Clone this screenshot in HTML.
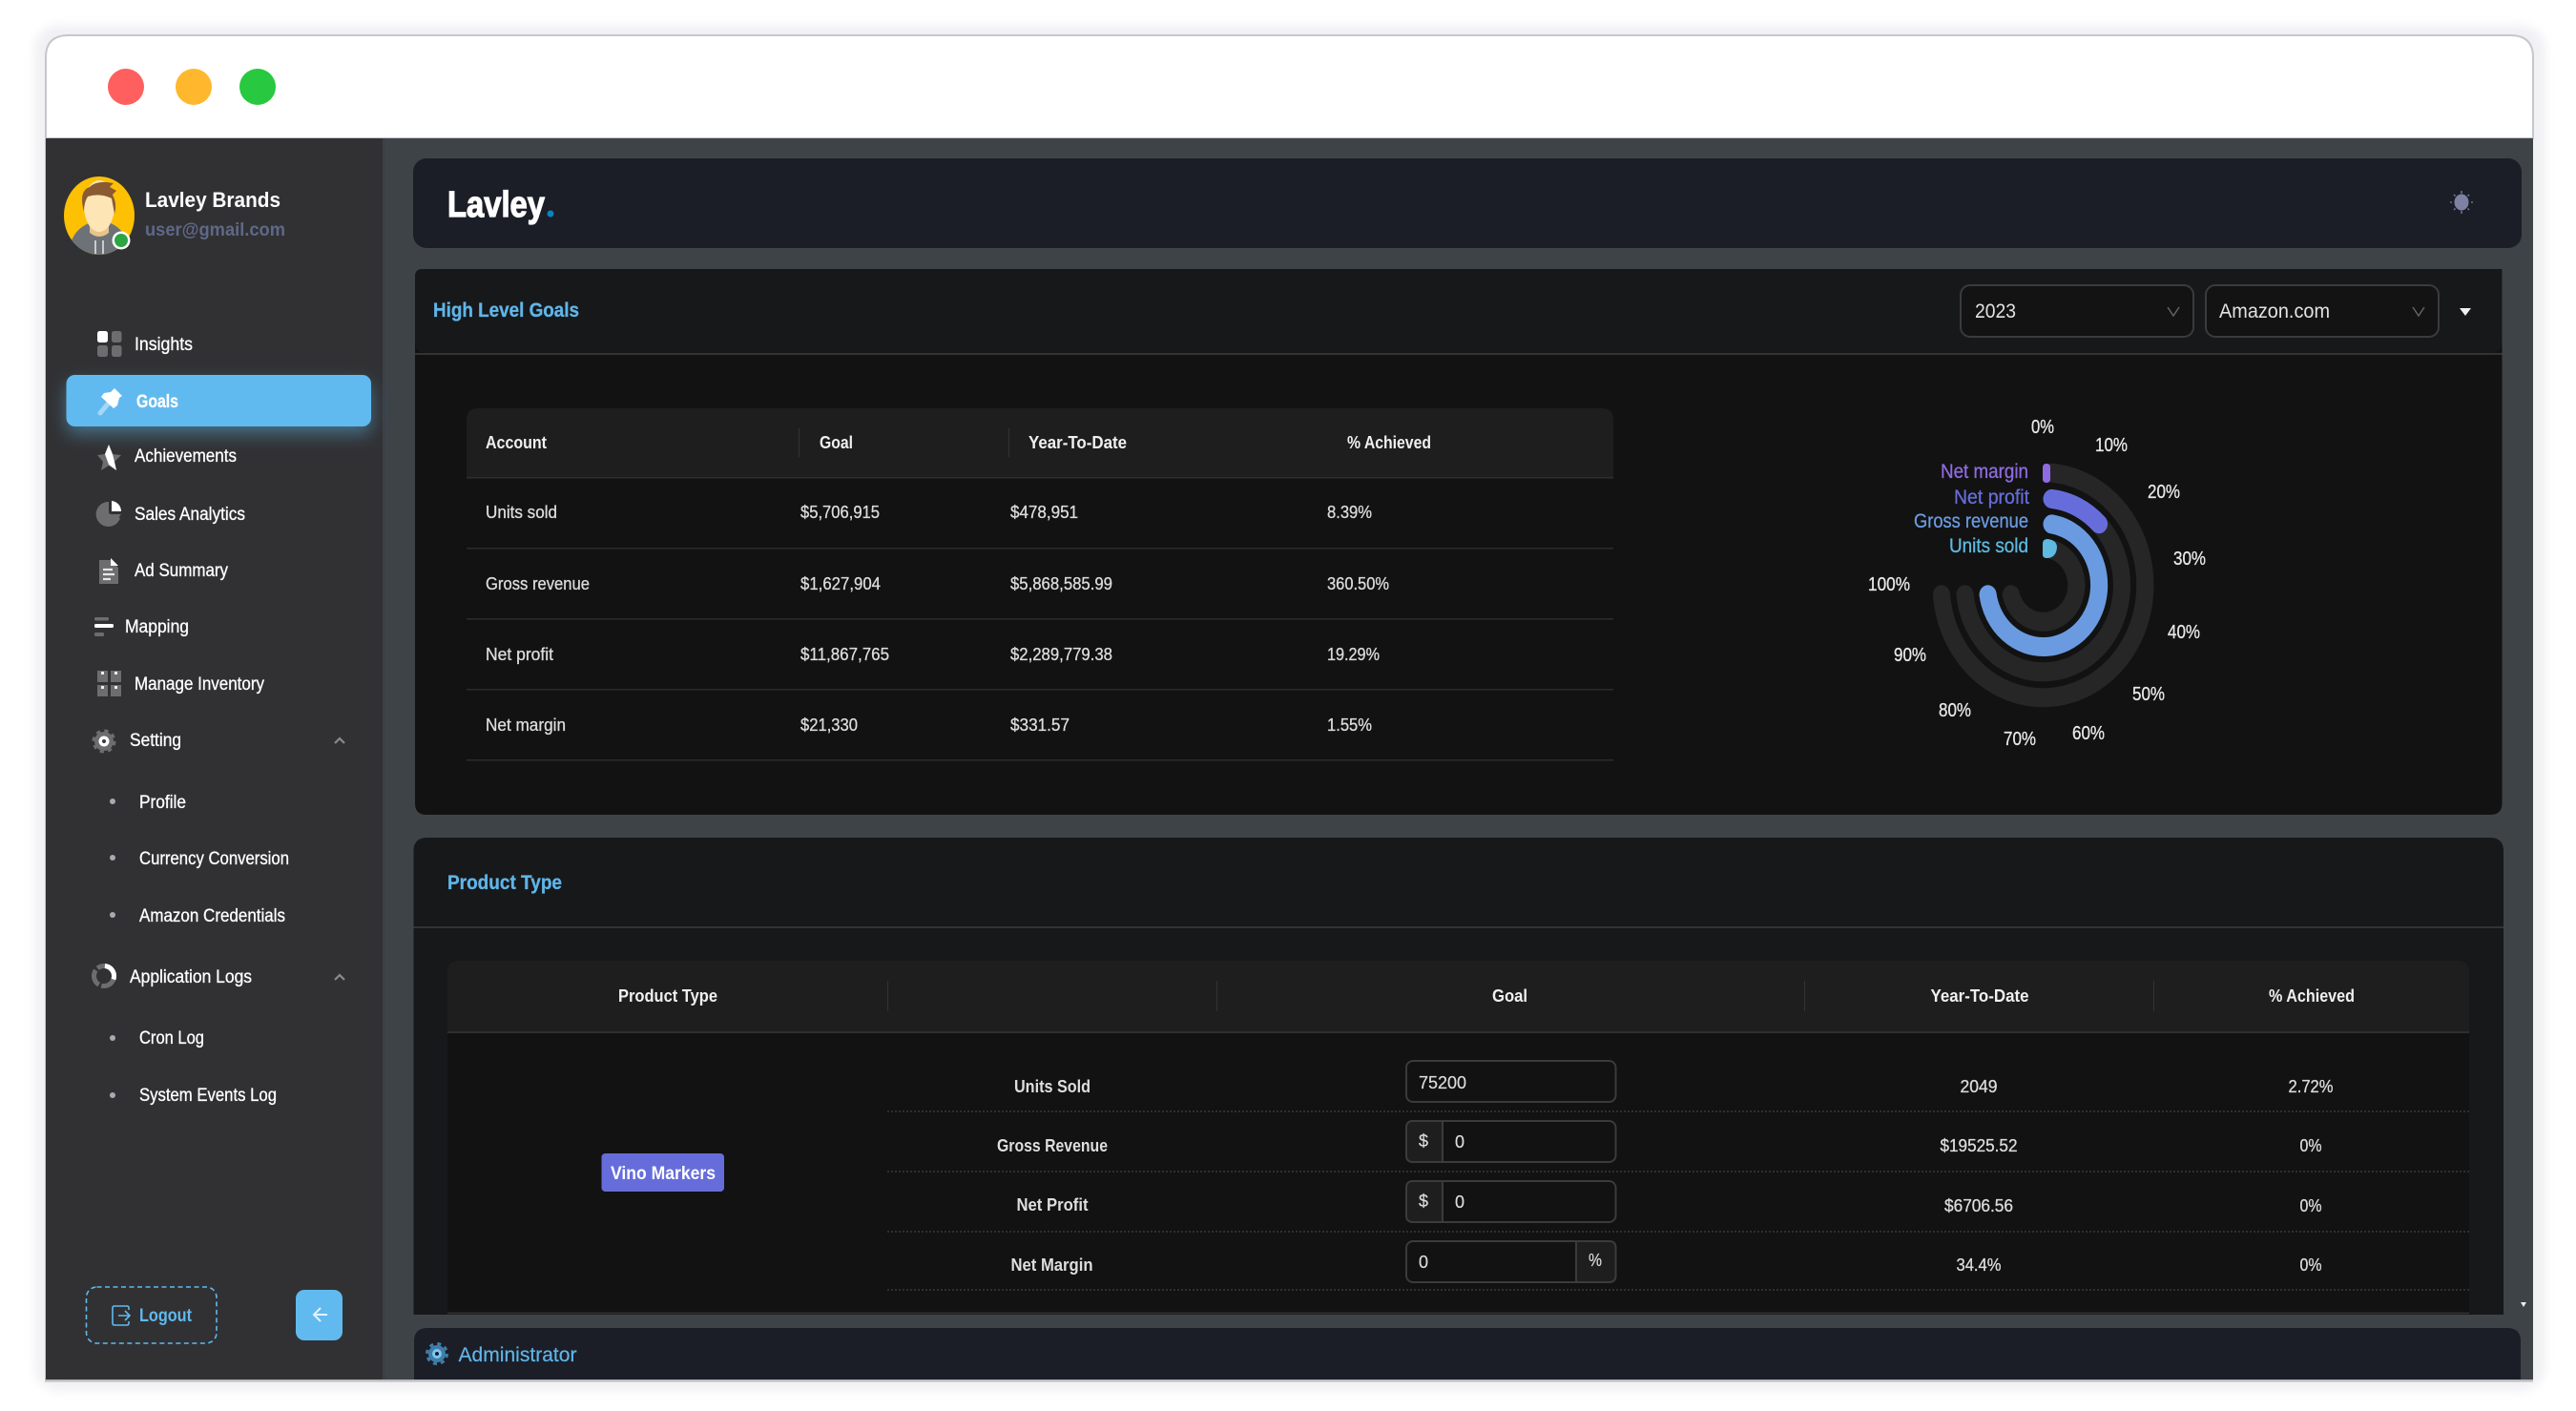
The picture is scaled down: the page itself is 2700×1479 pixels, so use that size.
<!DOCTYPE html>
<html><head><meta charset="utf-8"><title>Lavley</title>
<style>
html,body{margin:0;padding:0;background:#fff;width:2700px;height:1479px;overflow:hidden}
svg{display:block}
text{font-family:"Liberation Sans",sans-serif}
.n{font-size:19px;fill:#fff;stroke:#fff;stroke-width:.3}
.th{font-size:18px;font-weight:bold;fill:#f0f0f0}
.td{font-size:18px;fill:#dcdcdc;stroke:#dcdcdc;stroke-width:.3}
.tb{font-size:18px;font-weight:bold;fill:#dedede}
.c{font-size:20px;fill:#e8e8e8;stroke:#e8e8e8;stroke-width:.3}
.l{font-size:21px;stroke-width:.3}
.v{font-size:18px;fill:#dcdcdc;stroke:#dcdcdc;stroke-width:.2}
</style></head><body>
<svg xmlns="http://www.w3.org/2000/svg" width="2700" height="1479" viewBox="0 0 2700 1479">
<defs>
<filter id="b" x="-5%" y="-5%" width="110%" height="110%"><feGaussianBlur stdDeviation="5"/></filter>
<filter id="g" x="-30%" y="-60%" width="160%" height="240%"><feGaussianBlur stdDeviation="9"/></filter>
<clipPath id="av"><ellipse cx="104" cy="226" rx="37" ry="41"/></clipPath>
</defs>
<rect width="2700" height="1479" fill="#fff"/>
<rect x="36" y="26" width="2632" height="1432" rx="26" fill="#f1f1f4" filter="url(#b)"/>
<path d="M48 145V60Q48 37 72 37H2631Q2655 37 2655 60V145Z" fill="#fff" stroke="#c6c6ce" stroke-width="2"/>
<rect x="47" y="145" width="1" height="1302" fill="#c4c4c8"/>
<rect x="47" y="1446" width="2608" height="2.5" fill="#bdbdc0"/>
<circle cx="132" cy="91" r="19" fill="#ff5f5f"/>
<circle cx="203" cy="91" r="19" fill="#ffb72d"/>
<circle cx="270" cy="91" r="19" fill="#28c840"/>

<!-- main bg -->
<rect x="403" y="145" width="2252" height="1301" fill="#3e4347"/>
<!-- sidebar -->
<rect x="48" y="145" width="353" height="1301" fill="#313133"/>
<rect x="401" y="145" width="3" height="1301" fill="#394048"/>

<!-- avatar -->
<ellipse cx="104" cy="226" rx="37" ry="41" fill="#fdc003"/>
<g clip-path="url(#av)">
<path d="M72 270Q72 243 93 234H116Q136 243 136 270Z" fill="#6c7278"/>
<path d="M94 226H114V244Q104 252 94 244Z" fill="#e8c48c"/>
<ellipse cx="104" cy="216" rx="16" ry="27" fill="#fde5b6"/>
<path d="M88 222Q82 200 94 196Q100 190 112 191L119 192L115 196L122 200L118 204Q123 214 120 224L117 208Q105 202 92 206Q88 212 88 222Z" fill="#8a5a33"/>
<path d="M100 252V266M108 252V266" stroke="#c8ccd0" stroke-width="2"/>
</g>
<circle cx="127" cy="252" r="9.5" fill="#fff"/><circle cx="127" cy="252" r="7" fill="#2ba642"/>

<text x="152" y="217" font-size="22" font-weight="bold" fill="#fff" textLength="142" lengthAdjust="spacingAndGlyphs">Lavley Brands</text>
<text x="152" y="247" font-size="19" font-weight="bold" fill="#5f6888" textLength="147" lengthAdjust="spacingAndGlyphs">user@gmail.com</text>

<!-- Insights -->
<rect x="102" y="347" width="11" height="12" rx="2.5" fill="#fff"/>
<rect x="117" y="347" width="10.500" height="12" rx="2.5" fill="#6d6d6f"/>
<rect x="102" y="362" width="11" height="12" rx="2.5" fill="#6d6d6f"/>
<rect x="117" y="362" width="10.500" height="12" rx="2.5" fill="#6d6d6f"/>
<text class="n" x="141" y="367" textLength="61" lengthAdjust="spacingAndGlyphs">Insights</text>

<!-- Goals -->
<rect x="69.500" y="393" width="319.500" height="54" rx="9" fill="#60baef" opacity=".45" filter="url(#g)" transform="translate(0 8)"/>
<rect x="69.500" y="393" width="319.500" height="54" rx="9" fill="#60baef"/>
<path d="M105 433L115 421" stroke="#a6d8f5" stroke-width="5" stroke-linecap="round"/>
<path d="M120 407L128 415L125 417L123 425L119 428L106 416L109 412L116 411Z" fill="#fff"/>
<text class="n" x="143" y="427" font-weight="bold" style="font-size:19px" textLength="44" lengthAdjust="spacingAndGlyphs">Goals</text>

<!-- Achievements -->
<polygon points="114,466 118,476 127,477 120,484 122,493 114,488 106,493 108,484 102,477 110,476" fill="#6d6d6f"/>
<polygon points="114,466 118,476 120,484 122,493 114,487 110,476" fill="#fff"/>
<text class="n" x="141" y="484" textLength="107" lengthAdjust="spacingAndGlyphs">Achievements</text>

<!-- Sales Analytics -->
<path d="M114 526A13 13 0 1 0 126 543L114 538Z" fill="#6d6d6f"/>
<path d="M117 525A11 11 0 0 1 127 536H117Z" fill="#fff"/>
<path d="M117 539H127L122 546Z" fill="#6d6d6f"/>
<text class="n" x="141" y="545" textLength="116" lengthAdjust="spacingAndGlyphs">Sales Analytics</text>

<!-- Ad Summary -->
<path d="M104 587H116L124 595V612H104Z" fill="#6d6d6f"/>
<path d="M116 585L124 593H116Z" fill="#fff"/>
<path d="M108 597H118M108 602H120M108 607H116" stroke="#e8e8e8" stroke-width="2.2"/>
<text class="n" x="141" y="604" textLength="98" lengthAdjust="spacingAndGlyphs">Ad Summary</text>

<!-- Mapping -->
<rect x="99" y="647" width="15" height="3.500" rx="1.5" fill="#6d6d6f"/>
<rect x="99" y="654" width="20" height="4" rx="1.5" fill="#fff"/>
<rect x="99" y="663" width="10" height="4" rx="1.5" fill="#6d6d6f"/>
<text class="n" x="131" y="663" textLength="67" lengthAdjust="spacingAndGlyphs">Mapping</text>

<!-- Inventory -->
<rect x="102" y="703" width="11" height="12" fill="#6d6d6f"/><rect x="116" y="703" width="11" height="12" fill="#6d6d6f"/>
<rect x="102" y="718" width="11" height="12" fill="#6d6d6f"/><rect x="116" y="718" width="11" height="12" fill="#6d6d6f"/>
<rect x="106" y="704" width="3" height="3" fill="#eee"/><rect x="120" y="704" width="3" height="3" fill="#eee"/>
<rect x="106" y="719" width="3" height="3" fill="#eee"/><rect x="120" y="719" width="3" height="3" fill="#eee"/>
<text class="n" x="141" y="723" textLength="136" lengthAdjust="spacingAndGlyphs">Manage Inventory</text>

<!-- Setting -->
<circle cx="109" cy="777" r="10" fill="#6d6d6f"/>
<circle cx="109" cy="777" r="11" fill="none" stroke="#6d6d6f" stroke-width="3" stroke-dasharray="4.300 4.340"/>
<circle cx="109" cy="777" r="5.500" fill="#fff"/><circle cx="109" cy="777" r="2" fill="#3a3a3c"/>
<text class="n" x="136" y="782" textLength="54" lengthAdjust="spacingAndGlyphs">Setting</text>
<path d="M351 779L356 774L361 779" fill="none" stroke="#8a8a8c" stroke-width="2.2"/>

<circle cx="118" cy="840" r="3" fill="#a9a9b2"/>
<text class="n" x="146" y="847" textLength="49" lengthAdjust="spacingAndGlyphs">Profile</text>
<circle cx="118" cy="899" r="3" fill="#a9a9b2"/>
<text class="n" x="146" y="906" textLength="157" lengthAdjust="spacingAndGlyphs">Currency Conversion</text>
<circle cx="118" cy="959" r="3" fill="#a9a9b2"/>
<text class="n" x="146" y="966" textLength="153" lengthAdjust="spacingAndGlyphs">Amazon Credentials</text>

<!-- App logs -->
<circle cx="109" cy="1023" r="10.500" fill="none" stroke="#6d6d6f" stroke-width="5" pathLength="360" stroke-dasharray="95 15 105 15 115 15" transform="rotate(120 109 1023)"/>
<circle cx="109" cy="1023" r="10.500" fill="none" stroke="#fff" stroke-width="5" pathLength="360" stroke-dasharray="105 255" transform="rotate(-85 109 1023)"/>
<text class="n" x="136" y="1030" textLength="128" lengthAdjust="spacingAndGlyphs">Application Logs</text>
<path d="M351 1027L356 1022L361 1027" fill="none" stroke="#8a8a8c" stroke-width="2.2"/>
<circle cx="118" cy="1088" r="3" fill="#a9a9b2"/>
<text class="n" x="146" y="1094" textLength="68" lengthAdjust="spacingAndGlyphs">Cron Log</text>
<circle cx="118" cy="1148" r="3" fill="#a9a9b2"/>
<text class="n" x="146" y="1154" textLength="144" lengthAdjust="spacingAndGlyphs">System Events Log</text>

<!-- Logout -->
<rect x="90.500" y="1349" width="136.500" height="59" rx="11" fill="none" stroke="#60baef" stroke-width="1.600" stroke-dasharray="5 3.500"/>
<path d="M135 1373V1371Q135 1369 133 1369H120Q118 1369 118 1371V1387Q118 1389 120 1389H133Q135 1389 135 1387V1385M124 1379H136M131 1374L136 1379L131 1384" fill="none" stroke="#60baef" stroke-width="1.600"/>
<text x="146" y="1385" font-size="19" font-weight="bold" fill="#60baef" textLength="55" lengthAdjust="spacingAndGlyphs">Logout</text>
<rect x="310" y="1352" width="49" height="53" rx="9" fill="#60baef"/>
<path d="M343 1378H329M336 1371L329 1378L336 1385" fill="none" stroke="#e4f3fd" stroke-width="2"/>

<!-- Header panel -->
<rect x="433" y="166" width="2210" height="94" rx="14" fill="#1b1e27"/>
<text x="469" y="227" font-size="38" font-weight="bold" fill="#fff" stroke="#fff" stroke-width="1.2" textLength="102" lengthAdjust="spacingAndGlyphs">Lavley</text>
<circle cx="577" cy="224" r="3.500" fill="#0a84c0"/>
<!-- sun -->
<ellipse cx="2580" cy="212" rx="7.500" ry="8.500" fill="#7d82a3"/>
<path d="M2580 200V203M2580 221V224M2568 212H2570M2590 212H2592M2572 204L2573.500 205.500M2588 204L2586.500 205.500M2572 220L2573.500 218.500M2588 220L2586.500 218.500" stroke="#7d82a3" stroke-width="1.300"/>

<!-- Card 1 -->
<path d="M435 290Q435 282 443 282H2622.500V842Q2622.500 854 2610 854H447Q435 854 435 842Z" fill="#121212"/>
<path d="M435 290Q435 282 443 282H2622.500V358Q2622.500 370 2610 370H447Q435 370 435 358Z" fill="#17181a"/>
<rect x="435" y="370" width="2187.500" height="2" fill="#323335"/>
<text x="454" y="332" font-size="21" font-weight="bold" fill="#5fb5e8" stroke="#5fb5e8" stroke-width=".3" textLength="153" lengthAdjust="spacingAndGlyphs">High Level Goals</text>

<rect x="2055" y="299" width="244" height="54" rx="10" fill="#131313" stroke="#3b3b3d" stroke-width="2"/>
<text x="2070" y="333" font-size="21" fill="#e2e2e2" textLength="43" lengthAdjust="spacingAndGlyphs">2023</text>
<path d="M2272 322L2278 331L2284 322" fill="none" stroke="#666" stroke-width="1.400"/>
<rect x="2312" y="299" width="244" height="54" rx="10" fill="#131313" stroke="#3b3b3d" stroke-width="2"/>
<text x="2326" y="333" font-size="21" fill="#e2e2e2" textLength="116" lengthAdjust="spacingAndGlyphs">Amazon.com</text>
<path d="M2529 322L2535 331L2541 322" fill="none" stroke="#666" stroke-width="1.400"/>
<polygon points="2578,323 2590,323 2584,331" fill="#f0f0f0"/>

<!-- Table 1 -->
<path d="M489 500V440Q489 428 501 428H1679Q1691 428 1691 440V500Z" fill="#1e1e1e"/>
<rect x="489" y="500" width="1202" height="1.500" fill="#2f2f2f"/>
<rect x="837" y="449" width="1" height="30" fill="#333"/>
<rect x="1057" y="449" width="1" height="30" fill="#333"/>
<text class="th" x="509" y="470" textLength="64" lengthAdjust="spacingAndGlyphs">Account</text>
<text class="th" x="859" y="470" textLength="35" lengthAdjust="spacingAndGlyphs">Goal</text>
<text class="th" x="1078" y="470" textLength="103" lengthAdjust="spacingAndGlyphs">Year-To-Date</text>
<text class="th" x="1412" y="470" textLength="88" lengthAdjust="spacingAndGlyphs">% Achieved</text>

<text class="td" x="509" y="543" textLength="75" lengthAdjust="spacingAndGlyphs">Units sold</text>
<text class="td" x="839" y="543" textLength="83" lengthAdjust="spacingAndGlyphs">$5,706,915</text>
<text class="td" x="1059" y="543" textLength="71" lengthAdjust="spacingAndGlyphs">$478,951</text>
<text class="td" x="1391" y="543" textLength="47" lengthAdjust="spacingAndGlyphs">8.39%</text>
<rect x="489" y="574" width="1202" height="1.500" fill="#2c2c2c"/>

<text class="td" x="509" y="618" textLength="109" lengthAdjust="spacingAndGlyphs">Gross revenue</text>
<text class="td" x="839" y="618" textLength="84" lengthAdjust="spacingAndGlyphs">$1,627,904</text>
<text class="td" x="1059" y="618" textLength="107" lengthAdjust="spacingAndGlyphs">$5,868,585.99</text>
<text class="td" x="1391" y="618" textLength="65" lengthAdjust="spacingAndGlyphs">360.50%</text>
<rect x="489" y="648" width="1202" height="1.500" fill="#2c2c2c"/>

<text class="td" x="509" y="692" textLength="71" lengthAdjust="spacingAndGlyphs">Net profit</text>
<text class="td" x="839" y="692" textLength="93" lengthAdjust="spacingAndGlyphs">$11,867,765</text>
<text class="td" x="1059" y="692" textLength="107" lengthAdjust="spacingAndGlyphs">$2,289,779.38</text>
<text class="td" x="1391" y="692" textLength="55" lengthAdjust="spacingAndGlyphs">19.29%</text>
<rect x="489" y="722" width="1202" height="1.500" fill="#2c2c2c"/>

<text class="td" x="509" y="766" textLength="84" lengthAdjust="spacingAndGlyphs">Net margin</text>
<text class="td" x="839" y="766" textLength="60" lengthAdjust="spacingAndGlyphs">$21,330</text>
<text class="td" x="1059" y="766" textLength="62" lengthAdjust="spacingAndGlyphs">$331.57</text>
<text class="td" x="1391" y="766" textLength="47" lengthAdjust="spacingAndGlyphs">1.55%</text>
<rect x="489" y="796" width="1202" height="1.500" fill="#2c2c2c"/>

<!-- Chart -->
<g transform="translate(2141.5 613.3) scale(.906 1)" fill="none" stroke-width="20" stroke-linecap="round">
<path d="M10 -117.600A118 118 0 1 1 -117.600 10" stroke="#262626"/>
<path d="M10 -90.400A91 91 0 1 1 -90.400 10" stroke="#262626"/>
<path d="M10 -37.200A38.500 38.500 0 1 1 -37.200 10" stroke="#262626"/>
<path d="M10 -63.900A64.700 64.700 0 1 1 -63.900 10" stroke="#6a9be0"/>
<path d="M10 -90.400A91 91 0 0 1 64.600 -64.100" stroke="#666ddb"/>
</g>
<rect x="2141" y="486" width="8" height="20" rx="3.500" fill="#8e6be0"/>
<path d="M2141 570Q2141 565 2146 565Q2156 566 2156 574Q2155 585 2145 585Q2141 585 2141 581Z" fill="#5fb9e0"/>

<text class="l" x="2034" y="501" fill="#8e6be0" stroke="#8e6be0" textLength="92" lengthAdjust="spacingAndGlyphs">Net margin</text>
<text class="l" x="2048" y="528" fill="#666ddb" stroke="#666ddb" textLength="79" lengthAdjust="spacingAndGlyphs">Net profit</text>
<text class="l" x="2006" y="553" fill="#6a9be0" stroke="#6a9be0" textLength="120" lengthAdjust="spacingAndGlyphs">Gross revenue</text>
<text class="l" x="2043" y="579" fill="#5fb9e0" stroke="#5fb9e0" textLength="83" lengthAdjust="spacingAndGlyphs">Units sold</text>

<text class="c" x="2129" y="454" textLength="24" lengthAdjust="spacingAndGlyphs">0%</text>
<text class="c" x="2196" y="473" textLength="34" lengthAdjust="spacingAndGlyphs">10%</text>
<text class="c" x="2251" y="522" textLength="34" lengthAdjust="spacingAndGlyphs">20%</text>
<text class="c" x="2278" y="592" textLength="34" lengthAdjust="spacingAndGlyphs">30%</text>
<text class="c" x="2272" y="669" textLength="34" lengthAdjust="spacingAndGlyphs">40%</text>
<text class="c" x="2235" y="734" textLength="34" lengthAdjust="spacingAndGlyphs">50%</text>
<text class="c" x="2172" y="775" textLength="34" lengthAdjust="spacingAndGlyphs">60%</text>
<text class="c" x="2100" y="781" textLength="34" lengthAdjust="spacingAndGlyphs">70%</text>
<text class="c" x="2032" y="751" textLength="34" lengthAdjust="spacingAndGlyphs">80%</text>
<text class="c" x="1985" y="693" textLength="34" lengthAdjust="spacingAndGlyphs">90%</text>
<text class="c" x="1958" y="619" textLength="44" lengthAdjust="spacingAndGlyphs">100%</text>

<!-- Card 2 -->
<path d="M433.500 1378V892Q433.500 878 448 878H2610Q2624 878 2624 892V1378Z" fill="#17181a"/>
<rect x="433.500" y="971" width="2190.500" height="2" fill="#323335"/>
<text x="469" y="932" font-size="21" font-weight="bold" fill="#5fb5e8" stroke="#5fb5e8" stroke-width=".3" textLength="120" lengthAdjust="spacingAndGlyphs">Product Type</text>

<rect x="469" y="1082" width="2119" height="296" fill="#121212"/>
<path d="M469 1081V1019Q469 1007 481 1007H2576Q2588 1007 2588 1019V1081Z" fill="#1e1e1e"/>
<rect x="469" y="1081" width="2119" height="2" fill="#2f2f2f"/>
<rect x="469" y="1375.500" width="2119" height="2" fill="#2f2f2f"/>
<rect x="930" y="1028" width="1" height="32" fill="#333"/>
<rect x="1275" y="1028" width="1" height="32" fill="#333"/>
<rect x="1891" y="1028" width="1" height="32" fill="#333"/>
<rect x="2257" y="1028" width="1" height="32" fill="#333"/>
<text class="th" x="648" y="1050" textLength="104" lengthAdjust="spacingAndGlyphs">Product Type</text>
<text class="th" x="1564" y="1050" textLength="37" lengthAdjust="spacingAndGlyphs">Goal</text>
<text class="th" x="2023.500" y="1050" textLength="103" lengthAdjust="spacingAndGlyphs">Year-To-Date</text>
<text class="th" x="2378" y="1050" textLength="90" lengthAdjust="spacingAndGlyphs">% Achieved</text>

<g stroke="#393939" stroke-width="1.500" stroke-dasharray="2 2">
<path d="M930 1165H2588M930 1228H2588M930 1291H2588M930 1352H2588"/>
</g>

<rect x="630.500" y="1209" width="128.500" height="40" rx="4" fill="#666ddb"/>
<text x="640" y="1236" font-size="19" font-weight="bold" fill="#fff" textLength="110" lengthAdjust="spacingAndGlyphs">Vino Markers</text>

<text class="tb" x="1063" y="1145" textLength="80" lengthAdjust="spacingAndGlyphs">Units Sold</text>
<text class="tb" x="1045" y="1207" textLength="116" lengthAdjust="spacingAndGlyphs">Gross Revenue</text>
<text class="tb" x="1065.500" y="1269" textLength="75" lengthAdjust="spacingAndGlyphs">Net Profit</text>
<text class="tb" x="1059.500" y="1332" textLength="86" lengthAdjust="spacingAndGlyphs">Net Margin</text>

<!-- inputs -->
<rect x="1474" y="1112" width="219.500" height="43" rx="7" fill="#121212" stroke="#3b3b3d" stroke-width="2"/>
<text class="v" x="1487" y="1141" textLength="50" lengthAdjust="spacingAndGlyphs">75200</text>

<rect x="1474" y="1175" width="219.500" height="43" rx="7" fill="#121212" stroke="#3b3b3d" stroke-width="2"/>
<path d="M1512 1175H1481Q1474 1175 1474 1182V1211Q1474 1218 1481 1218H1512Z" fill="#1e1e1e" stroke="#3b3b3d" stroke-width="2"/>
<text class="v" x="1487" y="1202" textLength="10" lengthAdjust="spacingAndGlyphs">$</text>
<text class="v" x="1525" y="1203" textLength="10" lengthAdjust="spacingAndGlyphs">0</text>

<rect x="1474" y="1238" width="219.500" height="43" rx="7" fill="#121212" stroke="#3b3b3d" stroke-width="2"/>
<path d="M1512 1238H1481Q1474 1238 1474 1245V1274Q1474 1281 1481 1281H1512Z" fill="#1e1e1e" stroke="#3b3b3d" stroke-width="2"/>
<text class="v" x="1487" y="1265" textLength="10" lengthAdjust="spacingAndGlyphs">$</text>
<text class="v" x="1525" y="1266" textLength="10" lengthAdjust="spacingAndGlyphs">0</text>

<rect x="1474" y="1301" width="219.500" height="43" rx="7" fill="#121212" stroke="#3b3b3d" stroke-width="2"/>
<path d="M1652 1301H1686.500Q1693.500 1301 1693.500 1308V1337Q1693.500 1344 1686.500 1344H1652Z" fill="#1e1e1e" stroke="#3b3b3d" stroke-width="2"/>
<text class="v" x="1487" y="1329" textLength="10" lengthAdjust="spacingAndGlyphs">0</text>
<text class="v" x="1665" y="1327" font-size="16" textLength="14" lengthAdjust="spacingAndGlyphs">%</text>

<text class="td" x="2054.500" y="1145" textLength="39" lengthAdjust="spacingAndGlyphs">2049</text>
<text class="td" x="2033.500" y="1207" textLength="81" lengthAdjust="spacingAndGlyphs">$19525.52</text>
<text class="td" x="2038" y="1270" textLength="72" lengthAdjust="spacingAndGlyphs">$6706.56</text>
<text class="td" x="2050.500" y="1332" textLength="47" lengthAdjust="spacingAndGlyphs">34.4%</text>
<text class="td" x="2398.500" y="1145" textLength="47" lengthAdjust="spacingAndGlyphs">2.72%</text>
<text class="td" x="2410.500" y="1207" textLength="23" lengthAdjust="spacingAndGlyphs">0%</text>
<text class="td" x="2410.500" y="1270" textLength="23" lengthAdjust="spacingAndGlyphs">0%</text>
<text class="td" x="2410.500" y="1332" textLength="23" lengthAdjust="spacingAndGlyphs">0%</text>

<polygon points="2642,1365 2648,1365 2645,1370" fill="#eee"/>

<!-- Administrator -->
<path d="M434 1446V1406Q434 1392 448 1392H2628Q2642 1392 2642 1406V1446Z" fill="#1b1e27"/>
<circle cx="458" cy="1419" r="9" fill="#3f7ea8"/>
<circle cx="458" cy="1419" r="10.500" fill="none" stroke="#3f7ea8" stroke-width="3" stroke-dasharray="4 4.240"/>
<circle cx="458" cy="1419" r="5" fill="#7cc6f2"/><circle cx="458" cy="1419" r="2" fill="#1b1e27"/>
<text x="480.500" y="1427" font-size="21" fill="#5fb5e8" stroke="#5fb5e8" stroke-width=".2" textLength="124" lengthAdjust="spacingAndGlyphs">Administrator</text>
</svg>
</body></html>
